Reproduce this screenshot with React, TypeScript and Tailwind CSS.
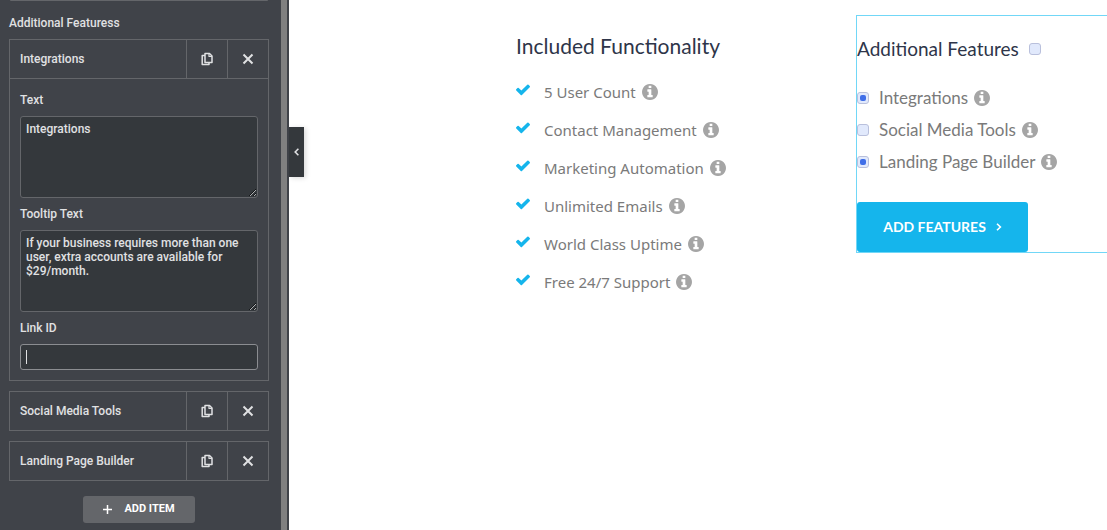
import { useState } from 'react';

const included = [
  '5 User Count',
  'Contact Management',
  'Marketing Automation',
  'Unlimited Emails',
  'World Class Uptime',
  'Free 24/7 Support',
];

const additional = [
  { label: 'Integrations', checked: true },
  { label: 'Social Media Tools', checked: false },
  { label: 'Landing Page Builder', checked: true },
];

const CloneIcon = () => (
  <svg width="12" height="14" viewBox="0 0 12 14" fill="none" stroke="currentColor" strokeWidth="1.5" strokeLinejoin="round">
    <path d="M4 1.5h4.5L11 4v6.5H4z" />
    <path d="M8 1.5v3h3" strokeWidth="1.2" />
    <path d="M4 3.5H1.2v9H8V10.5" />
  </svg>
);

const CloseIcon = () => (
  <svg width="12" height="12" viewBox="0 0 12 12" fill="none" stroke="currentColor" strokeWidth="2">
    <path d="M1.5 1.5l9 9M10.5 1.5l-9 9" />
  </svg>
);

const CheckIcon = () => (
  <svg viewBox="121 350 1550 1200" fill="currentColor" className="mr-3.5 mb-1 h-3 w-3.5 shrink-0 text-[#15b5ec]">
    <path d="M1671 566q0 40-28 68l-724 724-136 136q-28 28-68 28t-68-28l-136-136-362-362q-28-28-28-68t28-68l136-136q28-28 68-28t68 28l294 295 656-657q28-28 68-28t68 28l136 136q28 28 28 68z" />
  </svg>
);

const InfoIcon = () => (
  <svg viewBox="128 128 1536 1536" fill="currentColor" className="size-4 shrink-0 text-[#a5a5a5]">
    <path d="M1152 1376v-160q0-14-9-23t-23-9h-96v-512q0-14-9-23t-23-9h-320q-14 0-23 9t-9 23v160q0 14 9 23t23 9h96v320h-96q-14 0-23 9t-9 23v160q0 14 9 23t23 9h448q14 0 23-9t9-23zM1024 480v-160q0-14-9-23t-23-9h-192q-14 0-23 9t-9 23v160q0 14 9 23t23 9h192q14 0 23-9t9-23zM1664 896q0 209-103 385.5t-279.5 279.5-385.5 103-385.5-103-279.5-279.5-103-385.5 103-385.5 279.5-279.5 385.5-103 385.5 103 279.5 279.5 103 385.5z" />
  </svg>
);

// Title bar of a repeater row
const RowHeader = ({ title }: { title: string }) => (
  <div className="flex h-[38px] divide-x divide-[#64666a]">
    <button type="button" className="flex-1 px-2.5 text-left">
      {title}
    </button>
    <button type="button" aria-label={`Duplicate ${title}`} className="flex w-[41px] items-center justify-center">
      <CloneIcon />
    </button>
    <button type="button" aria-label={`Remove ${title}`} className="flex w-10 items-center justify-center">
      <CloseIcon />
    </button>
  </div>
);

interface TextFieldProps {
  id: string;
  label: string;
  value: string;
}

const TextField = ({ id, label, value }: TextFieldProps) => (
  <div className="flex flex-col gap-2">
    <label htmlFor={id}>{label}</label>
    <textarea
      id={id}
      defaultValue={value}
      className="block h-[82px] w-full resize-y rounded-[3px] border border-[#64666a] bg-[#34383c] p-[5px] leading-[14px] outline-none"
    />
  </div>
);

const Sidebar = () => (
  <aside className="relative flex w-[289px] shrink-0 bg-[#404349] font-['Roboto',sans-serif] text-xs font-medium text-[#e0e1e3]">
    <div className="flex-1 pr-3 pl-[9px]">
      <div className="mx-px flex h-px justify-end rounded-b-[3px] bg-[#64666a]" />
      <h2 className="pt-[14px] pb-2">Additional Featuress</h2>
      <div className="flex flex-col gap-2.5">
        <div className="border border-[#64666a]">
          <RowHeader title="Integrations" />
          <div className="flex flex-col gap-2 border-t border-[#64666a] px-2.5 pt-[13px] pb-2.5">
            <TextField id="text" label="Text" value="Integrations" />
            <TextField
              id="tooltip"
              label="Tooltip Text"
              value="If your business requires more than one user, extra accounts are available for $29/month."
            />
            <div className="flex flex-col gap-2">
              <label htmlFor="link-id">Link ID</label>
              <div className="relative">
                <input
                  id="link-id"
                  className="block h-[26px] w-full rounded-[3px] border border-[#8b8d91] bg-[#34383c] px-[5px] outline-none"
                />
                <span className="pointer-events-none absolute top-1.5 left-1.5 h-[14px] w-px bg-[#e0e1e3]" />
              </div>
            </div>
          </div>
        </div>
        <div className="border border-[#64666a]">
          <RowHeader title="Social Media Tools" />
        </div>
        <div className="border border-[#64666a]">
          <RowHeader title="Landing Page Builder" />
        </div>
      </div>
      <button
        type="button"
        className="mx-auto mt-[15px] flex h-[27px] w-28 items-center justify-center gap-3 rounded-[3px] bg-[#64666a] text-[11px] font-bold text-white"
      >
        <svg width="9" height="9" viewBox="0 0 9 9" stroke="currentColor" strokeWidth="1.5">
          <path d="M4.5 0v9M0 4.5h9" />
        </svg>
        ADD ITEM
      </button>
    </div>
    <div className="w-2 border-r-2 border-[#404349] bg-[#808080]" />
    <button
      type="button"
      aria-label="Collapse panel"
      className="absolute top-[127px] left-full flex h-[50px] w-[15px] items-center justify-center bg-[#34383c] shadow-[2px_1px_5px_rgba(0,0,0,0.15)]"
    >
      <svg width="5" height="8" viewBox="0 0 5 8" fill="none" stroke="currentColor" strokeWidth="1.6">
        <path d="M4.4 0.8L1.2 4l3.2 3.2" />
      </svg>
    </button>
  </aside>
);

interface CheckboxProps {
  id: string;
  checked: boolean;
  label?: string;
}

const Checkbox = ({ id, checked, label }: CheckboxProps) => {
  const [on, setOn] = useState(checked);
  return (
    <input
      id={id}
      type="checkbox"
      aria-label={label}
      checked={on}
      onChange={() => setOn(!on)}
      className="grid size-3 shrink-0 appearance-none place-content-center rounded-[3px] border border-[#b9c0dc] bg-[#e1e9fc] before:size-1.5 before:rounded-[2px] checked:before:bg-[#3f6ee8]"
    />
  );
};

export default function App() {
  return (
    <div className="flex h-screen overflow-hidden bg-white">
      <Sidebar />
      <main className="flex flex-1 items-start pt-[15px] pl-[227px] font-['Lato',sans-serif] text-[#7a7a7a]">
        <section className="w-[340px] shrink-0 pt-[17px]">
          <h2 className="text-[21px] leading-7 text-[#2e3549]">Included Functionality</h2>
          <ul className="pt-[13px] font-['Noto_Sans',sans-serif] text-[15px]">
            {included.map((item) => (
              <li key={item} className="flex h-[38px] items-center">
                <CheckIcon />
                <span className="mr-1.5">{item}</span>
                <InfoIcon />
              </li>
            ))}
          </ul>
        </section>
        <section className="min-w-0 flex-1 border border-r-0 border-[#71d7f7]">
          <div className="flex items-center gap-2.5 pt-[19px]">
            <h2 className="text-[19px] leading-7 text-[#2e3549]">Additional Features</h2>
            <Checkbox id="all" checked={false} label="Select all features" />
          </div>
          <ul className="pt-[19px] text-[17px]">
            {additional.map((item) => (
              <li key={item.label} className="flex h-8 items-center">
                <Checkbox id={item.label} checked={item.checked} />
                <label htmlFor={item.label} className="mr-1.5 ml-2.5">
                  {item.label}
                </label>
                <InfoIcon />
              </li>
            ))}
          </ul>
          <button
            type="button"
            className="mt-6 flex h-[50px] w-[171px] items-center justify-center gap-2.5 rounded-[3px] bg-[#15b5ec] text-sm font-bold text-white"
          >
            ADD FEATURES
            <svg width="6" height="8" viewBox="0 0 6 8" fill="none" stroke="currentColor" strokeWidth="1.6">
              <path d="M1 0.7L4.4 4L1 7.3" />
            </svg>
          </button>
        </section>
      </main>
    </div>
  );
}
